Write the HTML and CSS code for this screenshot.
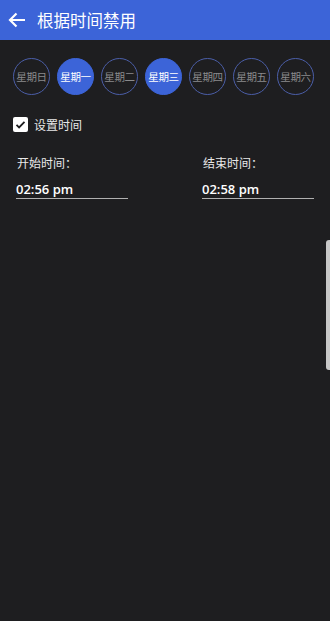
FILE: index.html
```html
<!DOCTYPE html>
<html>
<head>
<meta charset="utf-8">
<link rel="stylesheet" href="styles.css">
</head>
<body>
<div class="app">
  <header class="bar">
    <svg class="back" width="18" height="16" viewBox="0 0 18 16"><path d="M17 8H2M8.5 1.5L2 8l6.5 6.5" fill="none" stroke="#fff" stroke-width="2.2"/></svg>
    <span class="title">根据时间禁用</span>
  </header>
  <div class="days">
    <div class="day">星期日</div>
    <div class="day on">星期一</div>
    <div class="day">星期二</div>
    <div class="day on">星期三</div>
    <div class="day">星期四</div>
    <div class="day">星期五</div>
    <div class="day">星期六</div>
  </div>
  <div class="check-row">
    <span class="box"><svg width="15" height="15" viewBox="0 0 15 15"><path d="M3.5 7.8l2.6 2.6 5.4-5.6" fill="none" stroke="#1e1e20" stroke-width="1.8"/></svg></span>
    <span class="check-label">设置时间</span>
  </div>
  <div class="times">
    <div class="col">
      <div class="label">开始时间：</div>
      <div class="value">02:56 pm</div>
    </div>
    <div class="col">
      <div class="label">结束时间：</div>
      <div class="value">02:58 pm</div>
    </div>
  </div>
  <div class="scroll"></div>
</div>
</body>
</html>
```
FILE: styles.css
```css
html, body { margin: 0; padding: 0; }
body {
  width: 330px;
  height: 621px;
  background: #1e1e20;
  font-family: "Noto Sans CJK SC", "Noto Sans", sans-serif;
  overflow: hidden;
}
.app { position: relative; height: 621px; }
.bar {
  height: 40px;
  background: #3c64d8;
  display: flex;
  align-items: center;
  padding-left: 8px;
}
.back { margin-right: 11px; margin-top: -1px; }
.title { color: #fff; font-size: 16.5px; line-height: 20px; }
.days {
  display: flex;
  gap: 7px;
  padding: 18px 0 0 13px;
}
.day {
  width: 35px;
  height: 35px;
  border-radius: 50%;
  border: 1px solid #4b5ea8;
  color: #8a8a8c;
  font-size: 10.5px;
  display: flex;
  align-items: center;
  justify-content: center;
  letter-spacing: -0.3px;
}
.day.on {
  background: #3c64d8;
  border-color: #3c64d8;
  color: #fff;
}
.check-row {
  display: flex;
  align-items: center;
  padding: 21px 0 0 13px;
}
.box {
  width: 15px;
  height: 15px;
  background: #fff;
  border-radius: 2px;
  display: block;
}
.box svg { display: block; }
.check-label {
  color: #e8e8e8;
  font-size: 12px;
  margin-left: 6px;
}
.times {
  display: flex;
  padding: 22px 0 0 16px;
  gap: 74px;
}
.col { width: 112px; }
.label {
  color: #e8e8e8;
  font-size: 12px;
  line-height: 16px;
  padding-left: 1px;
}
.value {
  margin-top: 11px;
  color: #fff;
  font-family: "Open Sans", sans-serif;
  font-weight: 600;
  font-size: 13px;
  line-height: 15px;
  padding-bottom: 1px;
  border-bottom: 1.5px solid #b0b0b0;
}
.scroll {
  position: absolute;
  right: 0;
  top: 240px;
  width: 4px;
  height: 130px;
  background: #c8c8c8;
  border-radius: 3px 0 0 3px;
}
```
